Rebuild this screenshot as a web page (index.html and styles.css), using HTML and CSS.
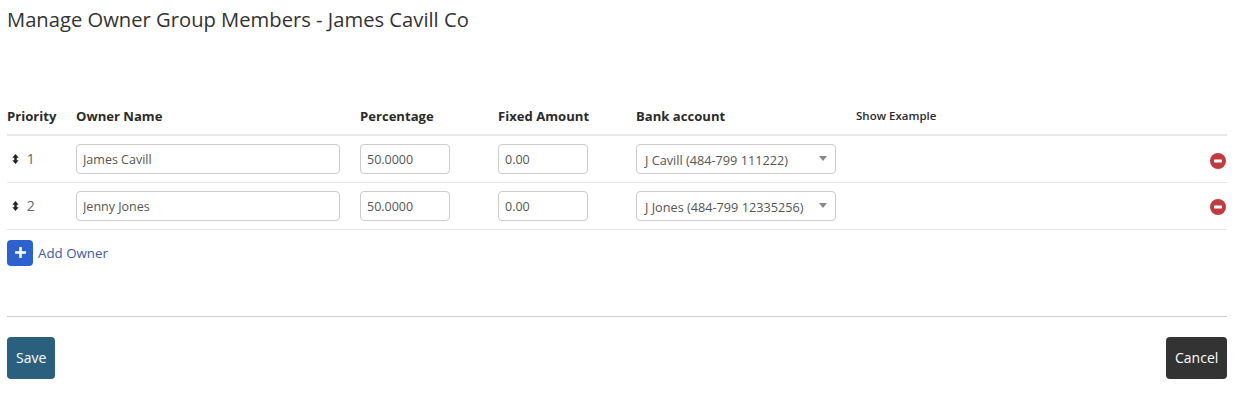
FILE: index.html
```html
<!DOCTYPE html>
<html lang="en">
<head>
  <meta charset="UTF-8" />
  <title>Manage Owner Group Members</title>
  <link rel="stylesheet" href="styles.css">
</head>
<body>
  <h1 class="page-title">Manage Owner Group Members - James Cavill Co</h1>

  <table class="owners">
    <colgroup>
      <col class="col-priority">
      <col class="col-name">
      <col class="col-amount">
      <col class="col-amount">
      <col class="col-bank">
      <col>
    </colgroup>
    <thead>
      <tr>
        <th>Priority</th>
        <th>Owner Name</th>
        <th>Percentage</th>
        <th>Fixed Amount</th>
        <th>Bank account</th>
        <th class="example">Show Example</th>
      </tr>
    </thead>
    <tbody>
      <tr>
        <td class="priority">
          <svg class="sort-icon" viewBox="0 0 8 12"><path d="M4 0 7.8 4.6H5.5V7.4H7.8L4 12 .2 7.4H2.5V4.6H.2Z"/></svg>
          1
        </td>
        <td><input class="field name" type="text" value="James Cavill"></td>
        <td><input class="field amount" type="text" value="50.0000"></td>
        <td><input class="field amount" type="text" value="0.00"></td>
        <td><div class="field select">J Cavill (484-799 111222)<span class="caret"></span></div></td>
        <td class="remove-cell">
          <svg class="remove" viewBox="0 0 16 16"><circle cx="8" cy="8" r="8"/><rect x="4" y="6.6" width="8" height="2.8" rx=".6"/></svg>
        </td>
      </tr>
      <tr>
        <td class="priority">
          <svg class="sort-icon" viewBox="0 0 8 12"><path d="M4 0 7.8 4.6H5.5V7.4H7.8L4 12 .2 7.4H2.5V4.6H.2Z"/></svg>
          2
        </td>
        <td><input class="field name" type="text" value="Jenny Jones"></td>
        <td><input class="field amount" type="text" value="50.0000"></td>
        <td><input class="field amount" type="text" value="0.00"></td>
        <td><div class="field select">J Jones (484-799 12335256)<span class="caret"></span></div></td>
        <td class="remove-cell">
          <svg class="remove" viewBox="0 0 16 16"><circle cx="8" cy="8" r="8"/><rect x="4" y="6.6" width="8" height="2.8" rx=".6"/></svg>
        </td>
      </tr>
    </tbody>
  </table>

  <a class="add-owner" href="#">
    <span class="add-icon">
      <svg viewBox="0 0 12 12"><path d="M4.6 0H7.4V4.6H12V7.4H7.4V12H4.6V7.4H0V4.6H4.6Z"/></svg>
    </span>
    Add Owner
  </a>

  <div class="actions">
    <button class="btn save">Save</button>
    <button class="btn cancel">Cancel</button>
  </div>
</body>
</html>
```

FILE: styles.css
```css
* {
  box-sizing: border-box;
  margin: 0;
  padding: 0;
}

body {
  font-family: "Open Sans", sans-serif;
  font-size: 13px;
  color: #555;
  background: #fff;
  padding: 0 19px 0 7px;
}

.page-title {
  font-size: 20.2px;
  font-weight: 400;
  line-height: 28px;
  color: #333;
  padding-top: 5px;
  margin-bottom: 64px;
}

.owners {
  width: 100%;
  table-layout: fixed;
  border-collapse: collapse;
}

.col-priority { width: 69px; }
.col-name { width: 284px; }
.col-amount { width: 138px; }
.col-bank { width: 220px; }

.owners th {
  text-align: left;
  font-size: 13.1px;
  font-weight: 700;
  color: #2b2b2b;
  height: 38px;
  border-bottom: 2px solid #e8e8e8;
}

.owners th.example {
  font-size: 11.5px;
  font-weight: 600;
}

.owners td {
  height: 47px;
  border-bottom: 1px solid #e8e8e8;
  vertical-align: middle;
}

.priority {
  padding-left: 4px;
  font-size: 14px;
  color: #666;
}

.sort-icon {
  width: 9px;
  height: 10px;
  margin-right: 3px;
  fill: #222;
}

.field {
  display: block;
  height: 30px;
  border: 1px solid #ccc;
  border-radius: 4px;
  padding: 2px 6px 0;
  font: inherit;
  font-size: 12.5px;
  line-height: 26px;
  color: #555;
  background: #fff;
}

.name { width: 264px; }
.amount { width: 90px; }

.select {
  position: relative;
  width: 200px;
  padding-left: 8px;
  font-size: 12.7px;
}

.caret {
  position: absolute;
  right: 8px;
  top: 11px;
  border-left: 4px solid transparent;
  border-right: 4px solid transparent;
  border-top: 5px solid #888;
}

.remove-cell {
  text-align: right;
}

.remove {
  display: inline-block;
  width: 16px;
  height: 16px;
  margin: 2px 1px 0 0;
  vertical-align: middle;
  fill: #c03a3f;
}

.remove rect {
  fill: #fff;
}

.add-owner {
  display: flex;
  align-items: center;
  gap: 5px;
  margin-top: 10px;
  font-size: 13.3px;
  color: #3a5ba8;
  text-decoration: none;
}

.add-icon {
  display: flex;
  align-items: center;
  justify-content: center;
  width: 26px;
  height: 26px;
  border-radius: 4px;
  background: #2b62d0;
}

.add-icon svg {
  width: 11px;
  height: 11px;
  fill: #fff;
}

.actions {
  display: flex;
  justify-content: space-between;
  margin-top: 50px;
  padding-top: 20px;
  border-top: 1px solid #ccc;
}

.btn {
  height: 42px;
  padding: 0 9px;
  border: none;
  border-radius: 4px;
  font: inherit;
  font-size: 14px;
  color: #fff;
}

.save {
  width: 48px;
  background: #2a5f7d;
}

.cancel {
  width: 61px;
  background: #333;
}
```
